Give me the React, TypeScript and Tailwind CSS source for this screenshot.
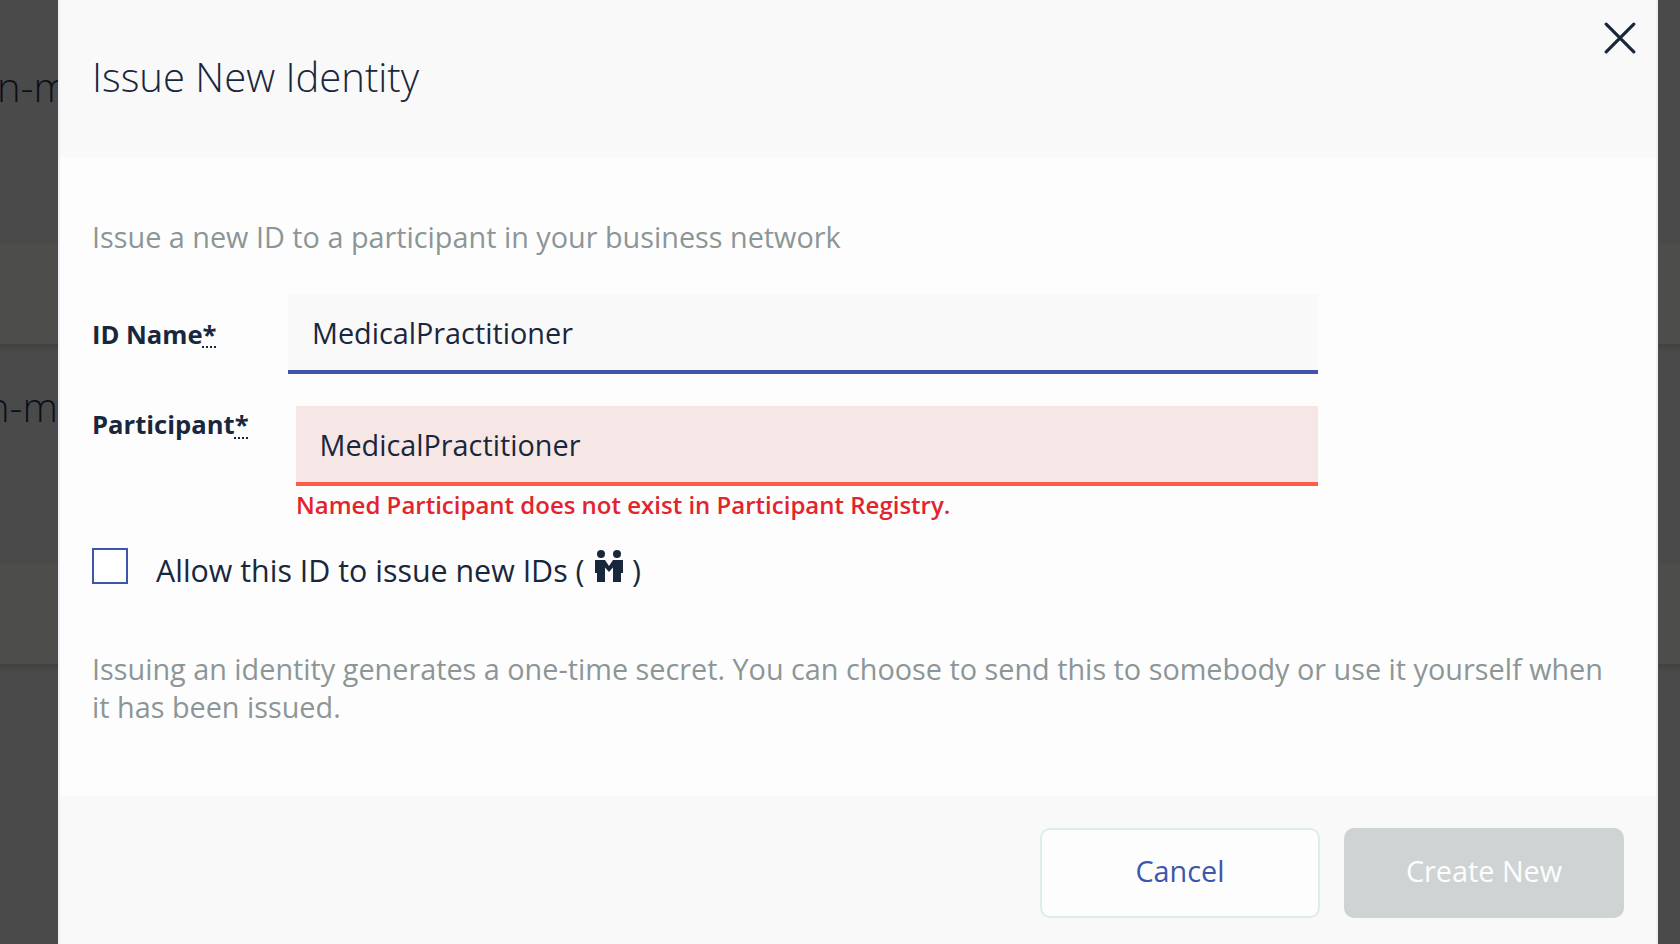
import React from "react";

function Required() {
  return (
    <span className="underline decoration-dotted decoration-2 underline-offset-[3px]">*</span>
  );
}

function HandshakeIcon() {
  return (
    <svg className="mr-[9px] ml-[10.5px] inline-block h-8 w-7 align-baseline" viewBox="0 0 28 32" fill="#19273c">
      <circle cx="6" cy="4" r="4" />
      <circle cx="22" cy="4" r="4" />
      <path d="M0 10H10L14 16L18 10H28V23H26V32H18V17.5L14 22L10 17.5V32H2V23H0Z" />
    </svg>
  );
}

function Registry({ header, offset }: { header: string; offset: string }) {
  return (
    <div>
      <div className={`flex items-start overflow-hidden ${header}`}>
        <span className={`text-[40px] font-light leading-[54px] whitespace-nowrap text-[#0a101a] ${offset}`}>n-m</span>
      </div>
      <div className="h-[100px] bg-[#4d4d4c]" />
      <div className="-mb-2 h-2 bg-linear-to-b from-[#404240] to-[#4a4a4b]" />
    </div>
  );
}

export default function App() {
  return (
    <div className="relative h-[944px] w-[1680px] overflow-hidden bg-[#4a4a4b] font-['Open_Sans',sans-serif] text-[#19273c]">
      <Registry header="h-[244px] pt-[60px]" offset="ml-[-3px]" />
      <Registry header="h-[220px] pt-[36px]" offset="ml-[-14px]" />

      <div className="absolute top-0 left-[58px] flex h-[944px] w-[1600px] flex-col border-x-2 border-[#f0f0f8] bg-[#fdfdfd]">
        <header className="flex h-[158px] items-start justify-between bg-[#f9f9f9] pl-8">
          <h1 className="mt-[50px] text-[40px] leading-[54px] font-light">Issue New Identity</h1>
          <button className="mt-[22px] mr-5" aria-label="Close">
            <svg className="h-8 w-8" viewBox="0 0 32 32" stroke="#19273c" strokeWidth="3.2" strokeLinecap="round">
              <path d="M2.2 2.2L29.8 29.8M29.8 2.2L2.2 29.8" />
            </svg>
          </button>
        </header>

        <main className="flex h-[638px] flex-col px-8 pt-[60px] text-[28.8px]">
          <p className="leading-[38px] text-[#8c9696]">Issue a new ID to a participant in your business network</p>

          <div className="mt-[38px] flex h-20 w-[1226px] items-center">
            <label className="w-[196px] pt-0.5 text-[25.6px] font-bold">ID Name<Required /></label>
            <div className="flex h-20 flex-1 items-center border-b-4 border-[#3d56ab] bg-[#f9f9f9] px-6 pt-0.5">MedicalPractitioner</div>
          </div>

          <div className="mt-8 flex w-[1226px] items-start">
            <label className="w-[204px] pt-px text-[25.6px] leading-[36px] font-bold">Participant<Required /></label>
            <div className="flex-1">
              <div className="flex h-20 items-center border-b-4 border-[#ff5c49] bg-[#f6e6e6] px-[23.5px] pt-0.5">MedicalPractitioner</div>
              <p className="mt-[3px] mb-px text-[24px] leading-8 font-semibold text-[#e3242d]">Named Participant does not exist in Participant Registry.</p>
            </div>
          </div>

          <div className="mt-[26px] flex h-[36px] items-start">
            <span className="h-9 w-9 border-2 border-[#3d56ab] bg-white" />
            <span className="ml-7 pt-0.5 text-[30.4px] leading-[40px] whitespace-nowrap">Allow this ID to issue new IDs (<HandshakeIcon />)</span>
          </div>

          <p className="mt-[66px] leading-[38px] text-[#8c9696]">
            Issuing an identity generates a one-time secret. You can choose to send this to somebody or use it yourself when it has been issued.
          </p>
        </main>

        <footer className="flex h-[148px] items-start justify-end gap-6 bg-[#f9f9f9] pt-8 pr-8 text-[28.8px]">
          <button className="h-[90px] w-[280px] rounded-[10px] border-2 border-[#dfecec] bg-[#fdfdfd] pb-1 text-[#3d56ab]">Cancel</button>
          <button className="h-[90px] w-[280px] rounded-[10px] bg-[#ced4d4] pb-1 text-[#fdfdfd]">Create New</button>
        </footer>
      </div>
    </div>
  );
}
